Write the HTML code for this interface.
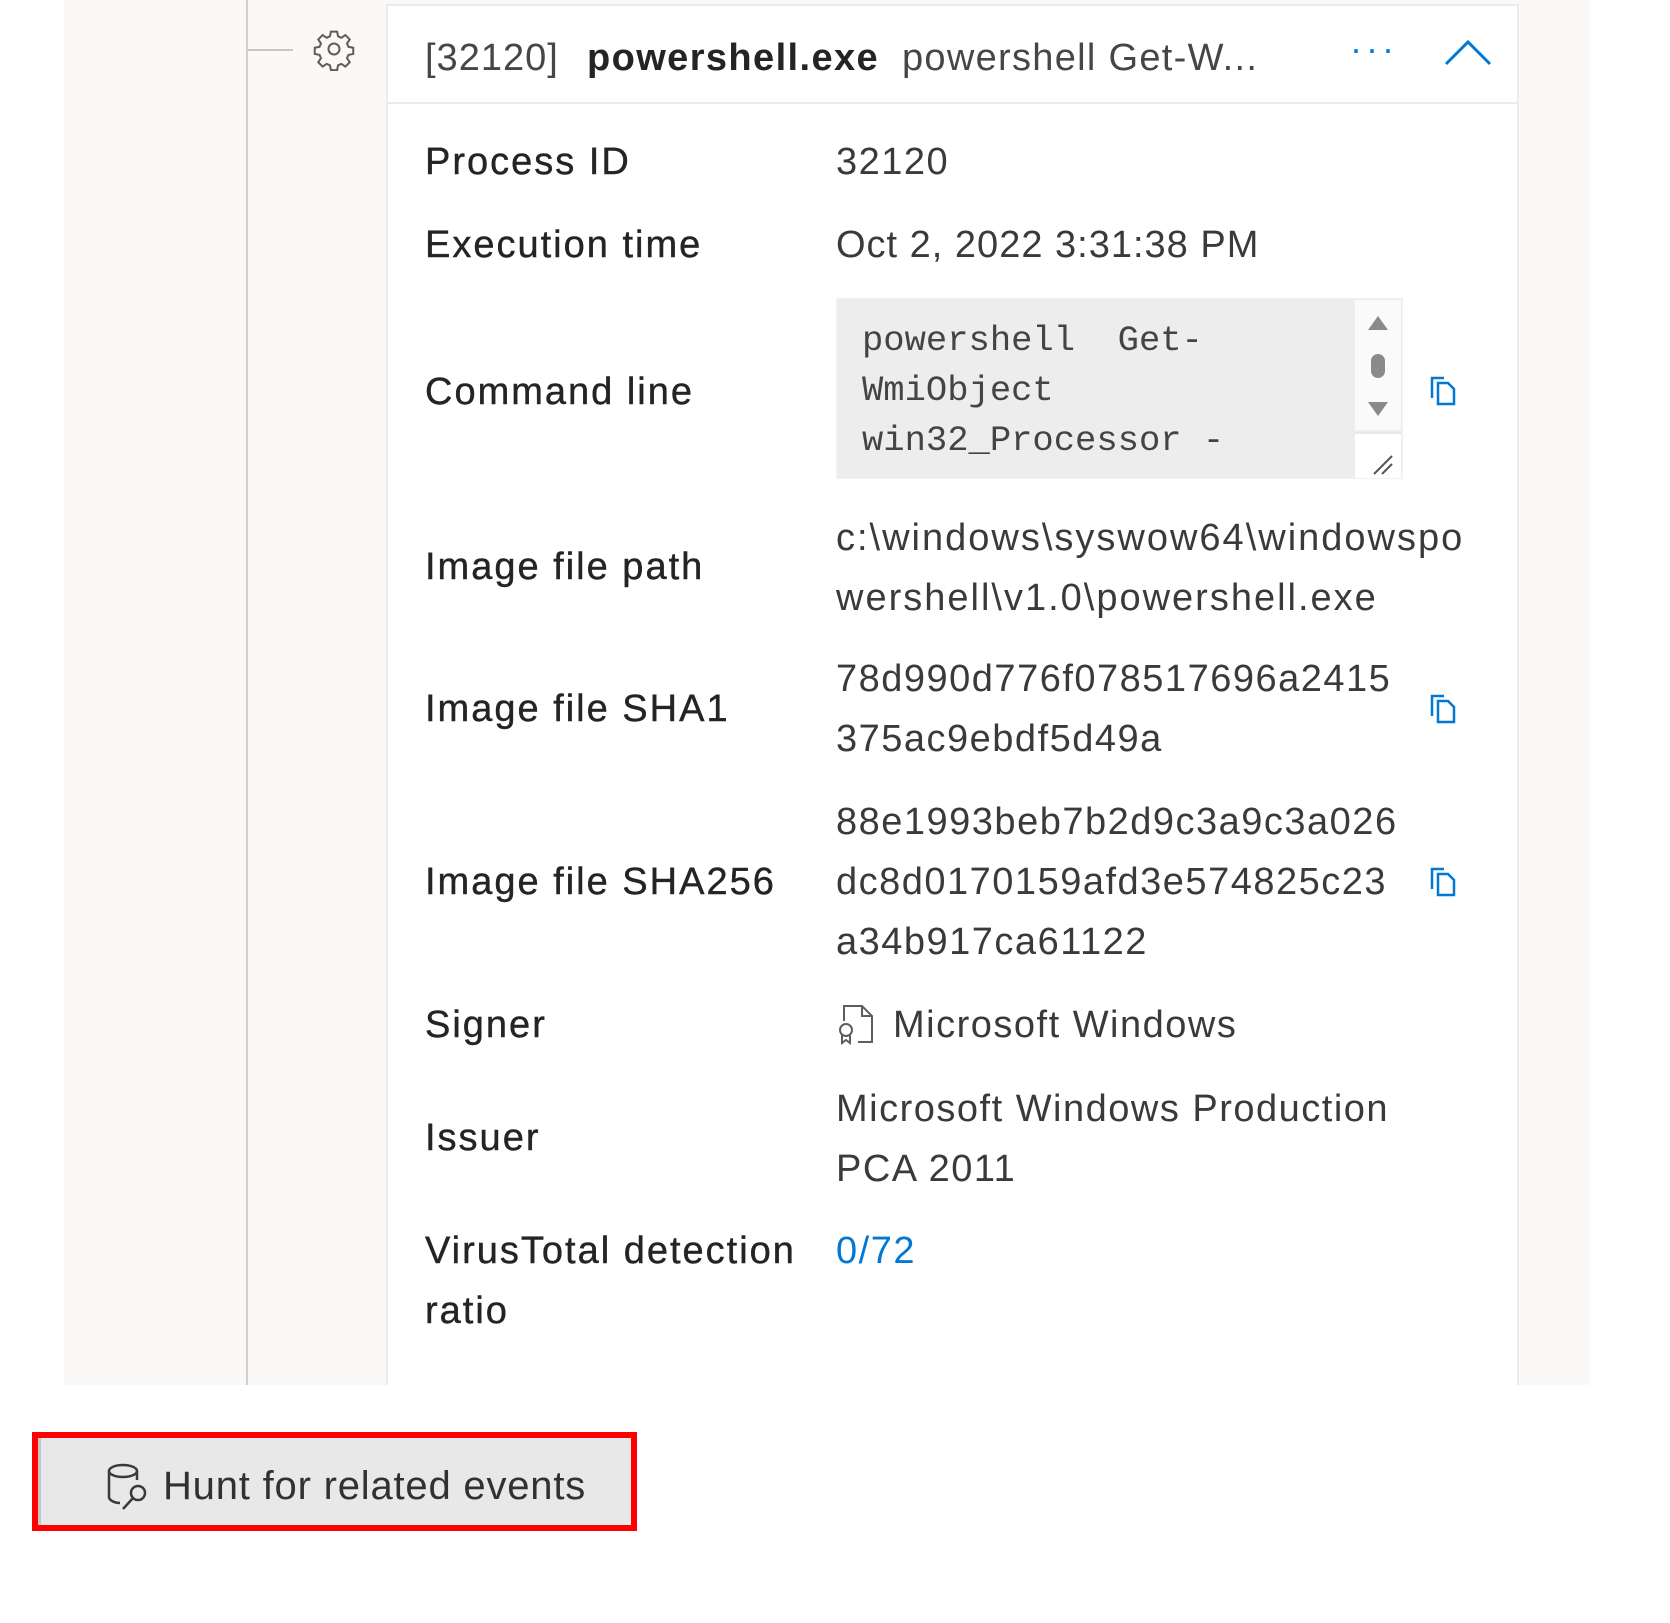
<!DOCTYPE html>
<html><head><meta charset="utf-8"><style>
*{margin:0;padding:0;box-sizing:border-box}
body{width:1670px;height:1623px;background:#fff;position:relative;overflow:hidden;font-family:"Segoe UI","Liberation Sans",sans-serif;color:#323130}
.a{position:absolute;white-space:nowrap}
.lbl{position:absolute;left:425px;font-size:38px;color:#252423;line-height:60px;letter-spacing:2px;-webkit-text-stroke:0.4px #252423}
.val{position:absolute;left:836px;font-size:38px;color:#3b3a39;line-height:60px;letter-spacing:1.5px}
.copy{position:absolute;left:1428px;width:30px;height:34px}
</style></head><body>
<div class="a" style="left:64px;top:0;width:1526px;height:1385px;background:#faf9f8"></div>
<div class="a" style="left:246px;top:0;width:2px;height:1385px;background:#d2d0ce"></div>
<div class="a" style="left:248px;top:49px;width:45px;height:2px;background:#c8c6c4"></div>
<svg class="a" style="left:312px;top:27px" width="44" height="44" viewBox="0 0 24 24" fill="none" stroke="#605e5c" stroke-width="1.1"><circle cx="12" cy="12" r="3"/><path d="M10.3 2.5h3.4l.5 2.6 1.8.8 2.2-1.5 2.4 2.4-1.5 2.2.8 1.8 2.6.5v3.4l-2.6.5-.8 1.8 1.5 2.2-2.4 2.4-2.2-1.5-1.8.8-.5 2.6h-3.4l-.5-2.6-1.8-.8-2.2 1.5-2.4-2.4 1.5-2.2-.8-1.8-2.6-.5v-3.4l2.6-.5.8-1.8-1.5-2.2 2.4-2.4 2.2 1.5 1.8-.8z"/></svg>
<div class="a" style="left:386px;top:4px;width:1133px;height:1381px;background:#fff;border:2px solid #edebe9;border-bottom:none"></div>
<div class="a" style="left:388px;top:102px;width:1129px;height:2px;background:#edebe9"></div>
<div class="a" style="left:425px;top:30px;font-size:38px;line-height:56px;color:#484644;letter-spacing:1px">[32120]</div>
<div class="a" style="left:587px;top:30px;font-size:38px;line-height:56px;font-weight:bold;color:#252423;letter-spacing:1.4px">powershell.exe</div>
<div class="a" style="left:902px;top:30px;font-size:38px;line-height:56px;color:#484644;letter-spacing:1.3px">powershell Get-W...</div>
<div class="a" style="left:1350px;top:28px;font-size:36px;color:#0078d4;letter-spacing:4px">···</div>
<svg class="a" style="left:1443px;top:38px" width="50" height="30" viewBox="0 0 50 30"><path d="M3 26L25 4L47 26" fill="none" stroke="#0078d4" stroke-width="3"/></svg>

<div class="lbl" style="top:132px">Process ID</div><div class="val" style="top:132px">32120</div>
<div class="lbl" style="top:215px">Execution time</div><div class="val" style="top:215px;letter-spacing:1px">Oct 2, 2022 3:31:38 PM</div>
<div class="lbl" style="top:362px">Command line</div>
<div class="a" style="left:836px;top:298px;width:567px;height:181px;background:#ededed;border:1px solid #f3f2f1"></div>
<div class="a" style="left:1355px;top:300px;width:46px;height:130px;background:#fafafa"></div>
<div class="a" style="left:1355px;top:432px;width:46px;height:46px;background:#fff;border-top:2px solid #e8e8e8"></div>
<svg class="a" style="left:1366px;top:312px" width="24" height="110"><path d="M12 4L22 18H2z" fill="#8a8a8a"/><rect x="5" y="42" width="14" height="24" rx="7" fill="#8a8a8a"/><path d="M2 90H22L12 104z" fill="#8a8a8a"/></svg>
<svg class="a" style="left:1372px;top:452px" width="24" height="24"><path d="M2 22L20 4M10 22L20 12" stroke="#555" stroke-width="2"/></svg>
<div class="a" style="left:862px;top:316px;font-family:'Liberation Mono',monospace;font-size:35.5px;line-height:50px;color:#444;white-space:pre">powershell  Get-
WmiObject
win32_Processor -</div>

<div class="lbl" style="top:537px">Image file path</div>
<div class="val" style="top:508px;letter-spacing:2px">c:\windows\syswow64\windowspo<br>wershell\v1.0\powershell.exe</div>
<div class="lbl" style="top:679px">Image file SHA1</div>
<div class="val" style="top:649px">78d990d776f078517696a2415<br>375ac9ebdf5d49a</div>
<div class="lbl" style="top:852px">Image file SHA256</div>
<div class="val" style="top:792px">88e1993beb7b2d9c3a9c3a026<br>dc8d0170159afd3e574825c23<br>a34b917ca61122</div>
<div class="lbl" style="top:995px">Signer</div>
<svg class="a" style="left:836px;top:1003px" width="40" height="42" viewBox="0 0 40 42" fill="none" stroke="#605e5c" stroke-width="2"><path d="M8 18V3h18l10 10v26H22"/><path d="M26 3v10h10"/><circle cx="10" cy="27" r="6"/><path d="M6 32v8l4-3 4 3v-8"/></svg>
<div class="val" style="top:995px;left:893px">Microsoft Windows</div>
<div class="lbl" style="top:1108px">Issuer</div>
<div class="val" style="top:1079px">Microsoft Windows Production<br>PCA 2011</div>
<div class="lbl" style="top:1221px;line-height:60px">VirusTotal detection<br>ratio</div>
<div class="val" style="top:1221px;color:#0078d4">0/72</div>

<svg class="copy" style="top:374px" viewBox="0 0 30 34" fill="none" stroke="#0078d4" stroke-width="2.5"><path d="M4 24V4h12"/><path d="M10 9h10l6 6v15H10z"/></svg>
<svg class="copy" style="top:692px" viewBox="0 0 30 34" fill="none" stroke="#0078d4" stroke-width="2.5"><path d="M4 24V4h12"/><path d="M10 9h10l6 6v15H10z"/></svg>
<svg class="copy" style="top:865px" viewBox="0 0 30 34" fill="none" stroke="#0078d4" stroke-width="2.5"><path d="M4 24V4h12"/><path d="M10 9h10l6 6v15H10z"/></svg>

<div class="a" style="left:32px;top:1432px;width:605px;height:99px;border:6px solid #f00;background:#e8e8e8"></div>
<div class="a" style="left:38px;top:1438px;width:3px;height:87px;background:#c8c6c4"></div>
<svg class="a" style="left:105px;top:1462px" width="48" height="50" viewBox="0 0 48 50" fill="none" stroke="#3b3a39" stroke-width="2.5"><ellipse cx="18" cy="9" rx="14" ry="6"/><path d="M4 9v26c0 3 5 6 11 6M32 9v9"/><circle cx="33" cy="31" r="7"/><path d="M28 36L18 47"/></svg>
<div class="a" style="left:163px;top:1459px;font-size:40px;line-height:54px;color:#323130;letter-spacing:0.8px">Hunt for related events</div>
</body></html>
